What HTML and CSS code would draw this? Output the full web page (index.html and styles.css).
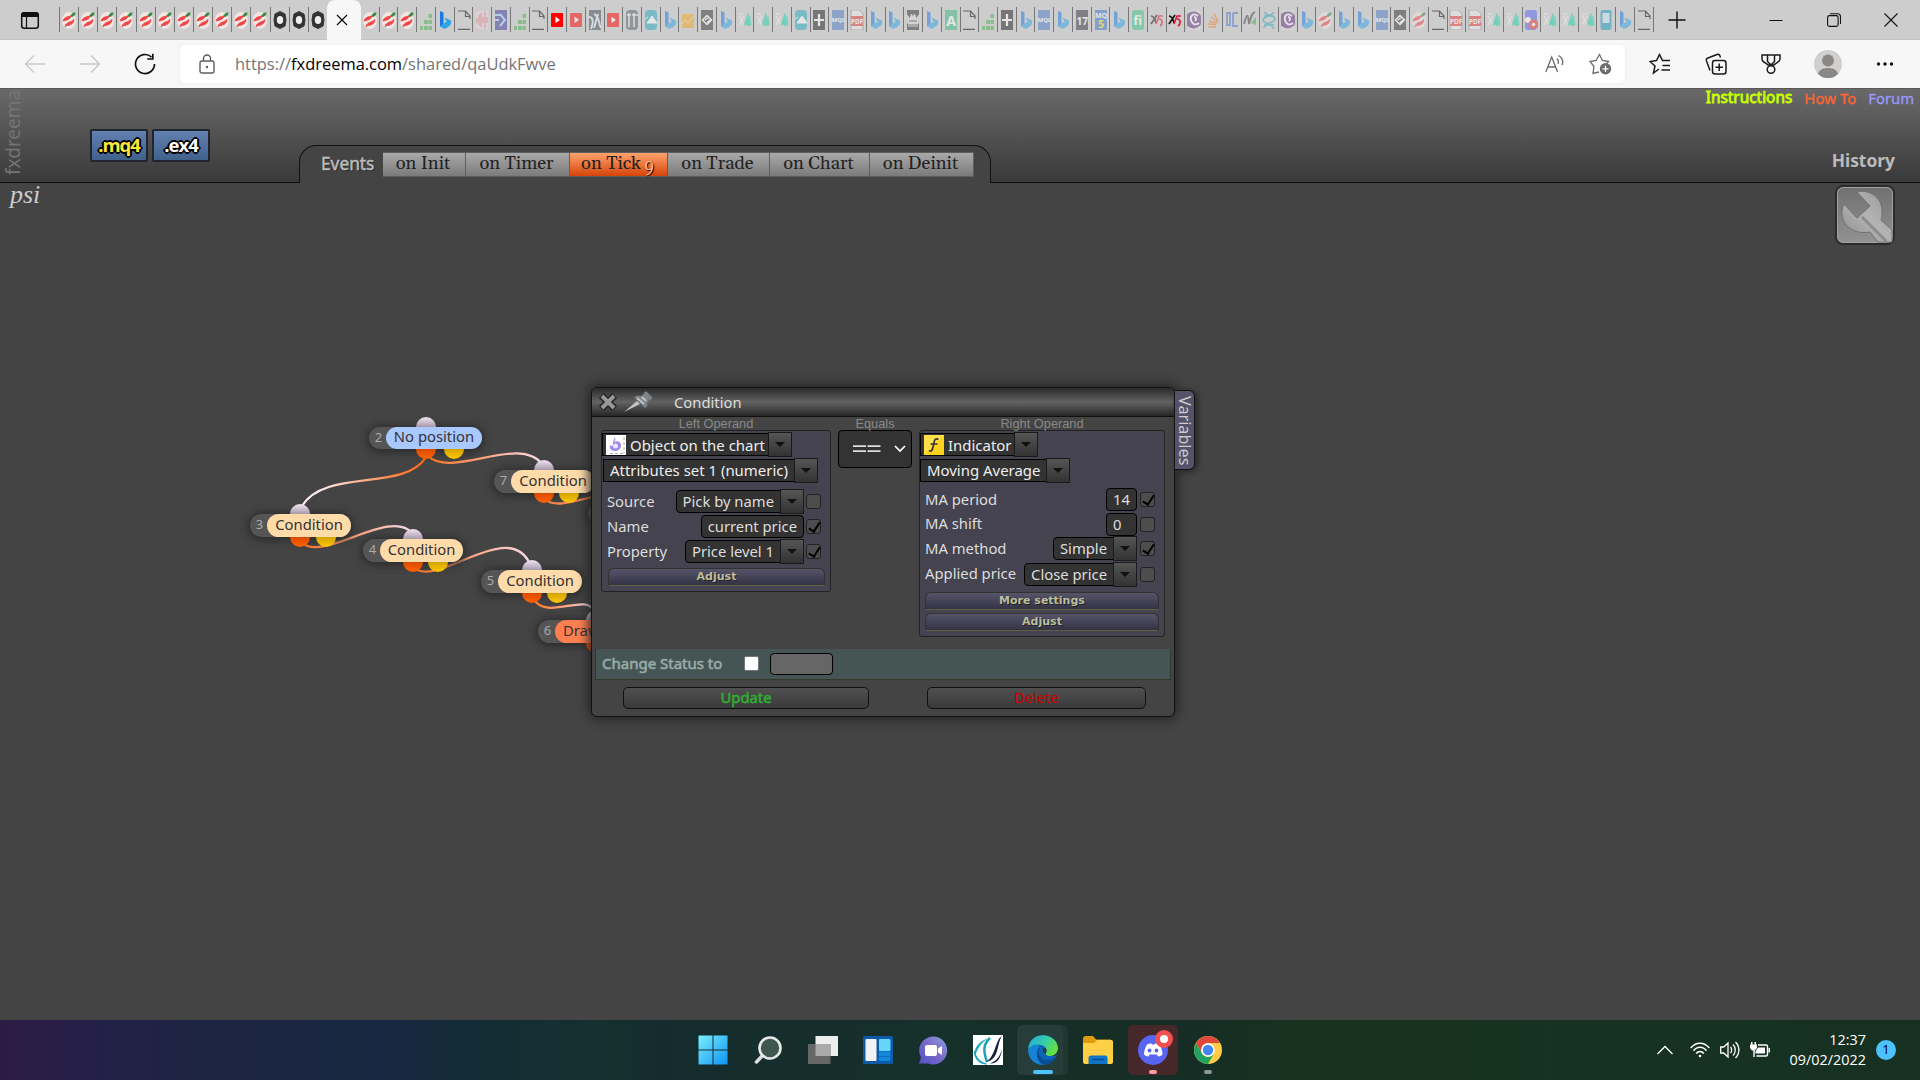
FILE: index.html
```html
<!DOCTYPE html>
<html lang="en">
<head>
	<meta charset="utf-8">
	<title>fxdreema - psi</title>
	<link rel="stylesheet" href="styles.css">
</head>
<body>

	<div class="tabstrip">
		<svg class="tabMenu" width="20" height="20" viewBox="0 0 20 20"><rect x="1.7" y="2.7" width="16.6" height="15.6" rx="2.5" fill="none" stroke="#111" stroke-width="1.5"/><path d="M1.5 7V4.500a2.500 2.500 0 0 1 2.500-2.500h12a2.500 2.500 0 0 1 2.500 2.500V7z" fill="#111"/><path d="M6.500 7v11" stroke="#111" stroke-width="1.200"/></svg>
		<div class="tabs pinned" id="tabsLeft"></div>
		<div class="tab active">
			<svg width="12" height="12" viewBox="0 0 12 12"><path d="M1 1l10 10M11 1L1 11" stroke="#111" stroke-width="1.3"/></svg>
		</div>
		<div class="tabs" id="tabsRight"></div>
		<svg class="newTab" width="18" height="18" viewBox="0 0 18 18"><path d="M9 0.500v17M0.500 9h17" stroke="#111" stroke-width="1.4"/></svg>
		<div class="winButtons">
			<svg width="14" height="14" viewBox="0 0 14 14"><path d="M0.500 7.500h13" stroke="#111"/></svg>
			<svg width="14" height="14" viewBox="0 0 14 14" fill="none" stroke="#111" stroke-width="1.100"><rect x=".6" y="2.600" width="10.500" height="10.800" rx="1.800"/><path d="M3 .7h7.500a3 3 0 0 1 3 3V11"/></svg>
			<svg width="14" height="14" viewBox="0 0 14 14"><path d="M.5 .5l13 13M13.500 .5l-13 13" stroke="#111" stroke-width="1.1"/></svg>
		</div>
	</div>

	<div class="toolbar">
		<div class="navButtons">
			<svg width="22" height="20" viewBox="0 0 22 20" fill="none" stroke="#c9c9c9" stroke-width="1.4"><path d="M21 10H1.500M10 1.500L1.500 10l8.500 8.500"/></svg>
			<svg width="22" height="20" viewBox="0 0 22 20" fill="none" stroke="#c9c9c9" stroke-width="1.4"><path d="M1 10h19.500M12 1.500L20.500 10 12 18.500"/></svg>
			<svg width="22" height="22" viewBox="0 0 22 22" fill="none" stroke="#111" stroke-width="1.7"><path d="M20.500 11A9.500 9.500 0 1 1 17.500 4.100M18.800 .8v5.200h-5.600"/></svg>
		</div>
		<div class="address">
			<svg width="16" height="20" viewBox="0 0 16 20" fill="none" stroke="#5d5d5d" stroke-width="1.400"><rect x="1" y="7" width="14" height="12" rx="2"/><path d="M4.500 7V4.500a3.500 3.500 0 0 1 7 0V7"/><circle cx="8" cy="13" r="1.200" fill="#5d5d5d" stroke="none"/></svg>
			<span class="url">https://<b>fxdreema.com</b>/shared/qaUdkFwve</span>
			<svg class="readAloud" width="20" height="20" viewBox="0 0 20 20" fill="none" stroke="#6b6b6b" stroke-width="1.300"><path d="M.8 18L6.700 3l5.900 15M2.800 13h7.800M12 4.500c1.600 1.700 1.600 3.800 1 5.500M13.500 1.500c4 2.500 5 6 3.500 9.500"/></svg>
			<svg width="23" height="22" viewBox="0 0 23 22" fill="none" stroke="#6b6b6b" stroke-width="1.300"><path d="M10 19l-6 1.500L5 13.500 1 8.500l6-1L10.500 1.500l3 6 6 1-2 2.500"/><circle cx="16.500" cy="15.800" r="5.700" fill="#6b6b6b" stroke="none"/><path d="M16.500 12.700v6.200M13.400 15.800h6.200" stroke="#fff"/></svg>
		</div>
		<div class="toolButtons">
			<svg width="22" height="22" viewBox="0 0 22 22" fill="none" stroke="#1a1a1a" stroke-width="1.500"><path d="M10 16l-5.500 4 1.500-7L1 8.500l6.500-1L10.500 1.500l3 6H21M13.500 12.500H21M12.500 17H21"/></svg>
			<svg width="22" height="22" viewBox="0 0 22 22" fill="none" stroke="#1a1a1a" stroke-width="1.500"><rect x="7.500" y="7.500" width="13.500" height="13.500" rx="2.500"/><path d="M14.200 10.500v7.500M10.500 14.200h7.500M5 17.500L1.500 8c-.5-1.500 0-2.500 1.500-3l9-3.500c1.500-.5 2.500 0 3 1.500l.5 1.500"/></svg>
			<svg width="20" height="22" viewBox="0 0 20 22" fill="none" stroke="#1a1a1a" stroke-width="1.500"><path d="M1 2h18v4c0 3-4 4-6 6H7C5 10 1 9 1 6zM6.500 2v6.500L10 12l3.500-3.500V2"/><circle cx="10" cy="16.500" r="3.800"/></svg>
			<svg width="28" height="28" viewBox="0 0 28 28"><circle cx="14" cy="14" r="14" fill="#d2d0ce"/><circle cx="14" cy="10.500" r="6" fill="#8a8886"/><path d="M4 24c1-8 19-8 20 0a14 14 0 0 1-20 0z" fill="#8a8886"/></svg>
			<svg width="18" height="4" viewBox="0 0 18 4" fill="#111"><circle cx="2.500" cy="2" r="1.700"/><circle cx="9" cy="2" r="1.700"/><circle cx="15.500" cy="2" r="1.700"/></svg>
		</div>
	</div>

	<div class="header">
		<div class="logo">fxdreema</div>
		<div class="export">
			<span class="mq4">.mq4</span>
			<span>.ex4</span>
		</div>
		<div class="events">
			<span class="eventsTitle">Events</span>
			<span class="event init">on Init</span>
			<span class="event timer">on Timer</span>
			<span class="event tick">on Tick <small>9</small></span>
			<span class="event trade">on Trade</span>
			<span class="event chart">on Chart</span>
			<span class="event deinit">on Deinit</span>
		</div>
		<div class="links">
			<div class="topLinks">
				<span class="instructions">Instructions</span>
				<span class="howto">How To</span>
				<span class="forum">Forum</span>
			</div>
			<div class="history">History</div>
		</div>
	</div>

	<div class="canvas">
		<div class="project">psi</div>
		<svg class="tools" width="60" height="60" viewBox="0 0 60 60">
			<defs>
				<linearGradient id="toolBg" x1="0" y1="0" x2="0" y2="1"><stop offset="0" stop-color="#707070"/><stop offset="1" stop-color="#939393"/></linearGradient>
				<linearGradient id="wrench" x1="0" y1="1" x2="1" y2="0"><stop offset="0" stop-color="#8d8d8d"/><stop offset=".5" stop-color="#b3b3b3"/><stop offset="1" stop-color="#999"/></linearGradient>
			</defs>
			<rect x="1" y="1" width="58" height="58" rx="7" fill="url(#toolBg)" stroke="#2b2b2b" stroke-width="2"/>
			<rect x="2.500" y="2.500" width="55" height="55" rx="6" fill="none" stroke="#a2a2a2"/>
			<path d="M22 7c12-3 25 5 25 19 0 4 0 7-1 9l11 10v12H43l-8-10C18 50 7 40 7 28c0-3 .5-6 2-9l13 14 13-12z" fill="url(#wrench)" stroke="#707070"/>
			<path d="M27 32l24 24" stroke="#8b8b8b" stroke-width="3"/>
		</svg>

		<svg class="wires" width="700" height="500" viewBox="0 183 700 500">
			<defs>
				<linearGradient id="w23" gradientUnits="userSpaceOnUse" x1="426" y1="459" x2="302" y2="505"><stop offset="0" stop-color="#ff6a10"/><stop offset=".25" stop-color="#ff8240"/><stop offset=".8" stop-color="#ffe6e2"/><stop offset="1" stop-color="#fff4ff"/></linearGradient>
				<linearGradient id="wire" x1="0" y1="0" x2="1" y2="0"><stop offset="0" stop-color="#ff7420"/><stop offset=".5" stop-color="#ffa580"/><stop offset="1" stop-color="#f4dcec"/></linearGradient>
			</defs>
			<g fill="none" stroke-width="2.300">
				<path d="M426 457C405 492 325 468 302 506" stroke="url(#w23)"/>
				<path d="M428 456C452 479 520 434 542 464" stroke="url(#wire)"/>
				<path d="M301 542C322 564 390 507 412 533" stroke="url(#wire)"/>
				<path d="M413 567C436 590 508 517 530 564" stroke="url(#wire)"/>
				<path d="M533 598C546 622 586 592 594 611" stroke="url(#wire)"/>
				<path d="M545 499C555 509 578 500 600 495" stroke="#ff8a55"/>
			</g>
		</svg>

		<div class="node n2"><i class="in"></i><i class="out"></i><i class="out no"></i><em>2</em><span>No position</span></div>
		<div class="node n3"><i class="in"></i><i class="out"></i><i class="out no"></i><em>3</em><span>Condition</span></div>
		<div class="node n4"><i class="in"></i><i class="out"></i><i class="out no"></i><em>4</em><span>Condition</span></div>
		<div class="node n5"><i class="in"></i><i class="out"></i><i class="out no"></i><em>5</em><span>Condition</span></div>
		<div class="node n6"><i class="in"></i><i class="out"></i><i class="out no"></i><em>6</em><span>Draw</span></div>
		<div class="node n7"><i class="in"></i><i class="out"></i><i class="out no"></i><em>7</em><span>Condition</span></div>
		<div class="node n8"><em>8</em></div>

		<div class="dialog">
			<div class="variables">Variables</div>
			<div class="dialogTitle">
				<svg width="20" height="20" viewBox="0 0 20 20"><path d="M3.500 3.500l13 13M16.500 3.500l-13 13" stroke="#222" stroke-width="7"/><path d="M4 4l12 12M16 4L4 16" stroke="#999" stroke-width="4"/></svg>
				<svg class="pin" width="30" height="22" viewBox="0 0 30 22"><path d="M1 21l13-11 3 3z" fill="#c3c6c8"/><path d="M11 6c3-2 6-1 7-1l3-2c0-2 1-3 3-2l5 5c1 2-1 3-3 3l-2 3c1 2 0 4-2 5z" fill="#7d8386"/><path d="M19 6l4 4M14 7l7 6" stroke="#bcc2c5" stroke-width="2"/></svg>
				<span>Condition</span>
			</div>

			<div class="operands">
				<div class="operand left">
					<h4>Left Operand</h4>
					<div class="panel">
						<div class="combo square first">
							<span><svg width="20" height="20" viewBox="0 0 20 20"><rect width="20" height="20" fill="#fff"/><path d="M4 18.500h14M18 2v16" stroke="#aaa" stroke-dasharray="3 2"/><path d="M9 2c1 2 0 4-1 5 3-2 7 0 7 3 0 4-3 6-6 6-4 0-6-3-5-6 1 2 3 1 3-1 0-3 1-4 2-7z" fill="#a08ae8"/><circle cx="9.500" cy="11" r="2.500" fill="#eee6ff"/></svg>Object on the chart</span><u></u>
						</div>
						<div class="combo square second"><span>Attributes set 1 (numeric)</span><u></u></div>
						<div class="param"><label>Source</label><div class="combo"><span>Pick by name</span><u></u></div><i class="check"></i></div>
						<div class="param"><label>Name</label><div class="field">current price</div><i class="check on"></i></div>
						<div class="param"><label>Property</label><div class="combo"><span>Price level 1</span><u></u></div><i class="check on"></i></div>
						<div class="bar">Adjust</div>
					</div>
				</div>

				<div class="operand middle">
					<h4>Equals</h4>
					<div class="equals">
						<svg width="28" height="8" viewBox="0 0 28 8"><path d="M0 1.200h13M14.500 1.200h13M0 6.200h13M14.500 6.200h13" stroke="#ddd" stroke-width="1.700"/></svg>
						<svg width="12" height="8" viewBox="0 0 12 8"><path d="M1 1l5 5 5-5" stroke="#fff" stroke-width="1.700" fill="none"/></svg>
					</div>
				</div>

				<div class="operand right">
					<h4>Right Operand</h4>
					<div class="panel">
						<div class="combo square first">
							<span><svg width="20" height="20" viewBox="0 0 20 20"><rect width="20" height="20" fill="#ffd21e"/><path d="M0 0h20L0 20z" fill="#ffe04a"/><path d="M14.500 4.500c-3-1.500-4 0-4.500 3L8.500 14c-.5 2-1.500 2.500-3.500 1.500M6.500 9h7" fill="none" stroke="#333" stroke-width="1.700"/></svg>Indicator</span><u></u>
						</div>
						<div class="combo square second"><span>Moving Average</span><u></u></div>
						<div class="param"><label>MA period</label><div class="field num">14</div><i class="check on"></i></div>
						<div class="param short"><label>MA shift</label><div class="field num">0</div><i class="check"></i></div>
						<div class="param"><label>MA method</label><div class="combo"><span>Simple</span><u></u></div><i class="check on"></i></div>
						<div class="param"><label>Applied price</label><div class="combo"><span>Close price</span><u></u></div><i class="check"></i></div>
						<div class="bar">More settings</div>
						<div class="bar">Adjust</div>
					</div>
				</div>
			</div>

			<div class="status">
				<span>Change Status to</span>
				<i></i>
				<div class="statusColor"></div>
			</div>
			<div class="dialogButtons">
				<div class="update">Update</div>
				<div class="delete">Delete</div>
			</div>
		</div>
	</div>

	<div class="taskbar">
		<div class="apps">
			<div class="app"><svg width="30" height="30" viewBox="0 0 30 30"><defs><linearGradient id="win" x1="0" y1="0" x2="1" y2="1"><stop offset="0" stop-color="#7af0ff"/><stop offset="1" stop-color="#0e92f4"/></linearGradient></defs><path d="M.5 .5h14v14H.5zM15.500 .5h14v14h-14zM.5 15.500h14v14H.5zM15.500 15.500h14v14h-14z" fill="url(#win)"/></svg></div>
			<div class="app"><svg width="28" height="28" viewBox="0 0 28 28"><path d="M9.500 18.500L2.500 26" stroke="#ddd" stroke-width="3.500" stroke-linecap="round"/><circle cx="16" cy="12" r="10.500" fill="#40574f" stroke="#e8e8e8" stroke-width="2.600"/></svg></div>
			<div class="app"><svg width="30" height="28" viewBox="0 0 30 28"><rect x="7.500" y="0" width="22.500" height="20" fill="#eee"/><rect x="0" y="8" width="22.500" height="20" fill="#666"/><rect x="7.500" y="8" width="15" height="12" fill="#aaa"/></svg></div>
			<div class="app"><svg width="30" height="28" viewBox="0 0 30 28"><rect width="30" height="28" rx="1.500" fill="#0c5aa8"/><rect x="2.500" y="3" width="11" height="22" rx="1" fill="#f2f2f4"/><rect x="16" y="3" width="11.500" height="12" rx="1" fill="#66d4fb"/><rect x="16" y="15.500" width="11.500" height="4.500" fill="#1487dc"/><rect x="16" y="20.500" width="11.500" height="4.500" rx="1" fill="#1487dc"/></svg></div>
			<div class="app"><svg width="30" height="29" viewBox="0 0 30 29"><defs><linearGradient id="chat" x1="1" y1="0" x2="0" y2="1"><stop offset="0" stop-color="#8ba0e0"/><stop offset=".5" stop-color="#7a68c8"/><stop offset="1" stop-color="#5050c0"/></linearGradient></defs><path d="M15 .5a14 14 0 1 1-5 27H1l2-6A14 14 0 0 1 15 .5z" fill="url(#chat)"/><rect x="7" y="9" width="12" height="11" rx="2" fill="#fff"/><path d="M20 12.500l4-2.500v9l-4-2.500z" fill="#fff"/></svg></div>
			<div class="app"><svg width="30" height="30" viewBox="0 0 30 30"><rect width="30" height="30" fill="#fff"/><path d="M15 3C5 7 0 14 2 22 4 14 8 8 15 3z" fill="#19a5b8"/><path d="M1.500 16c1 6 5 11 12 13-7 0-12-5-12-13z" fill="#19a5b8" stroke="#19a5b8"/><path d="M17 3c-8 7-6 15-3 24" fill="none" stroke="#19a5b8" stroke-width="2.500"/><path d="M29 1c-7 4-6 20-16 26 14-3 10-17 16-26z" fill="#17213f"/><path d="M29 14c-2 8-6 12-12 14.500 7 .5 11-5 12-14.500z" fill="#17213f"/></svg></div>
			<div class="app edge"><svg width="30" height="30" viewBox="0 0 30 30"><defs><linearGradient id="e1" x1="0" y1="0" x2="1" y2=".4"><stop offset="0" stop-color="#25a8e0"/><stop offset=".6" stop-color="#35cda6"/><stop offset="1" stop-color="#62e044"/></linearGradient></defs><circle cx="15" cy="15" r="14.800" fill="#0c63b8"/><path d="M15 13c-1 4 3 8 8 8 3 0 5 0 7-2v-4z" fill="#263d3a"/><path d="M.5 12C2 4 8 .2 15 .2 24 .2 30 7 30 13c0 5-4 8-8 8-3 0-5-1-4-3 2-3 0-7-5-8-5-1-10 0-12.500 5z" fill="url(#e1)"/><path d="M.3 15C3 9 9 9 12 11c-5 3-5 13 4 18.700C6 30.500 0 23 .3 15z" fill="#1584d2"/><path d="M12 13c-4 5 1 13 8 12 4 0 6-2 8.500-4-3 5-8 9-13 8.500C8 27 7 17 12 13z" fill="#0b4c94"/></svg><s></s></div>
			<div class="app"><svg width="30" height="28" viewBox="0 0 30 28"><path d="M0 3c0-2 1-3 2.500-3H10l3 3.500H28V12H0z" fill="#dc9c0c"/><path d="M0 7h11l3-3h14.500c1 0 1.500 1 1.500 2v20c0 1-1 2-2 2H2c-1 0-2-1-2-2z" fill="#ffcf45"/><path d="M5.500 28v-6c0-1.500 1-2.500 2.500-2.500h14c1.500 0 2.500 1 2.500 2.500v6z" fill="#1175c7"/><path d="M9 23.500h12" stroke="#084b91" stroke-width="1.500"/></svg></div>
			<div class="app discord"><svg width="36" height="36" viewBox="0 0 36 36"><circle cx="18" cy="18" r="15" fill="#5865f2"/><path d="M12 12.500c2-1 4-1.200 4.500-1l.5 1h2.500l.5-1c1 0 3 .3 4.500 1 2 3 3 7 3 10-1 1-3 2-4.500 2l-1-2h-7.500l-1 2c-1.500 0-3.500-1-4.500-2 0-3 1-7 3-10z" fill="#fff"/><circle cx="14.500" cy="18.500" r="1.900" fill="#5865f2"/><circle cx="21.500" cy="18.500" r="1.900" fill="#5865f2"/></svg><b></b><s></s></div>
			<div class="app chrome"><svg width="28" height="28" viewBox="0 0 28 28"><circle cx="14" cy="14" r="14" fill="#fc4"/><path d="M1.900 7A14 14 0 0 1 26.100 7H14a7 7 0 0 0-6 10.500z" fill="#e0463c"/><path d="M1.900 7A14 14 0 0 0 14 28l6-10.500A7 7 0 0 1 8 17.500z" fill="#1ea362"/><circle cx="14" cy="14" r="6.800" fill="#fff"/><circle cx="14" cy="14" r="5.200" fill="#4285f4"/></svg><s></s></div>
		</div>
		<div class="tray">
			<svg width="16" height="10" viewBox="0 0 16 10"><path d="M.5 9L8 1.500 15.500 9" fill="none" stroke="#fff" stroke-width="1.300"/></svg>
			<svg width="20" height="16" viewBox="0 0 20 16" fill="none" stroke="#fff" stroke-width="1.500"><path d="M.7 6c5-6.500 13.600-6.500 18.600 0M3.500 8.800c3.500-4.700 9.500-4.700 13 0M6.200 11.500c2-2.800 5.600-2.800 7.600 0"/><circle cx="10" cy="14" r="1.300" fill="#fff" stroke="none"/></svg>
			<svg width="20" height="18" viewBox="0 0 20 18" fill="none" stroke="#fff" stroke-width="1.300"><path d="M.7 6h3L8 2v14l-4.300-4h-3zM10.500 6c1.500 1.500 1.500 4.500 0 6M13 3.500c3 3 3 8 0 11M15.500 1c4.500 4.500 4.500 11.500 0 16"/></svg>
			<svg width="20" height="16" viewBox="0 0 20 16"><path d="M8 3h8c1 0 1.500.5 1.500 1.500v8c0 1-.5 1.500-1.500 1.500H6.500M4 8v7" fill="none" stroke="#fff" stroke-width="1.400"/><path d="M0 2.500h1V0h1.500v2.500H4.500V0H6v2.500h1V6L5 8.500H2L0 6zM8 5.500h7v6H5.500V9.500zM18.500 6h1.500v4.500h-1.500z" fill="#fff"/></svg>
			<div class="clock">12:37<br>09/02/2022</div>
			<div class="badge">1</div>
		</div>
	</div>

	<script>
		// favicons, all on a 20x20 grid where only the middle 14 units are visible
		var icons = {
			mm: '<ellipse cx="10" cy="10.500" rx="7" ry="8.500" fill="#f0e6e4"/><path d="M11 7C12 3.500 14 2 16.500 2.500c0 2.500-1.500 4.500-5.500 4.500z" fill="#3a8a45"/><path d="M4 11c1.500-4.500 5-4 8-5-1 4-5 4-8 5zM6 16.500c1.500-5 6-3.500 9-7-.5 6-5.500 5-9 7z" fill="#f04444" stroke="#f04444"/>',
			ring: '<path d="M5 4l5-2.500L15 4l1 6-1 6-5 2.500L5 16l-1-6z" fill="#333" stroke="#333"/><ellipse cx="10" cy="10" rx="3.200" ry="4" fill="#eee"/>',
			bars: '<path d="M4 16h3v4H4zM8 16h4v4H8zM8 10h4v4H8zM12.500 4H16v4h-3.500zM12.500 10H16v4h-3.500zM12.500 16H16v4h-3.500z" fill="#43b24b"/>',
			bing: '<path d="M5 1l3.500 1.500V14L5 17z" fill="#1a78e8"/><path d="M5 16l3.500-2.500 3-1.700L9.500 7.500l6.500 3c1 4-2 6-3.500 7L9 19z" fill="#2fa5e8"/>',
			doc: '<path d="M4 1h7.500L16 6v3M11.500 1v5.500H16M4 19.300h12" fill="none" stroke="#666" stroke-width="1.200"/>',
			wave: '<path d="M4 1h12v18H4z" fill="#eadada"/><path d="M5 8v5M7 5v10M9 3v14M11 7v6M13 2v16M15 7v6" stroke="#e05a6a"/>',
			fx: '<path d="M4 0h12v20H4z" fill="#3f3a98"/><path d="M4 5h5M4 10h4M9 4l5 6-5 6" fill="none" stroke="#9ad4ff" stroke-width="2"/>',
			yt: '<rect x="4" y="3" width="12" height="14" rx="1" fill="#f00"/><path d="M8.500 6.500v6.500l4.500-3z" fill="#fff"/>',
			jz: '<path d="M4 0h12v20H4z" fill="#454b52"/><path d="M4 7c4 0 5 4 2 12M9 4c6 3 4 9 7 14M13 4L9 18" stroke="#dce8f8" stroke-width="2" fill="none"/>',
			tt: '<rect x="4" y="0" width="12" height="20" rx="4" fill="#56606a"/><path d="M5 5h4M7 3v14M12 3v14M10 5h6" stroke="#eee" stroke-width="1.500"/>',
			tv: '<rect x="4" y="0" width="12" height="20" rx="4" fill="#25a9be"/><path d="M6 13l5-7 5 7zM4 9l3-2" fill="#fff" stroke="#fff"/>',
			yellow: '<path d="M4 4h12v14H4z" fill="#f5a623"/><path d="M4 14l3-4 3 3 6-7" stroke="#f8dca0" fill="none"/>',
			diamond: '<path d="M4 0h12v20H4z" fill="#333"/><path d="M5.500 10L10 5.500l4.500 4.500-4.500 4.500zM8 10l3-2M10 13l3-3" fill="none" stroke="#fff" stroke-width="1.500"/>',
			xa: '<path d="M4 6l5 9M9 6l-5 9M4 4h4" stroke="#eee" stroke-width="1.500"/><path d="M9 15l4-12 1 11zM12 16l3-10 1 9z" fill="#1cd3a8" stroke="#1cd3a8" stroke-width=".6"/>',
			plus: '<path d="M4 0h12v20H4z" fill="#222"/><path d="M10 4v12M5 10h10" stroke="#fff" stroke-width="2.200"/>',
			mql: '<path d="M4 0h12v20H4z" fill="#4f7cc8"/><text x="3.600" y="12" font-size="6" fill="#fff">MQL</text>',
			mql5: '<path d="M4 0h12v20H4z" fill="#3a74c8"/><text x="4" y="8" font-size="7" fill="#fff">MQ</text><text x="7.200" y="18" font-size="10" fill="#ffdf2a">5</text>',
			pdf: '<path d="M4 0h8l4 4v16H4z" fill="#eee" stroke="#777" stroke-width=".8"/><path d="M4 6h12v10H4z" fill="#e83b3b"/><text x="4" y="14" font-size="6.500" fill="#fff">PDF</text>',
			crown: '<path d="M4 0h12v20H4z" fill="#333"/><path d="M4 5l3 4 1.500-5L10 8l1.500-4L13 9l3-4-1 9H5zM5 16h10" fill="#ddd" stroke="#ddd"/><path d="M6 11h8" stroke="#333"/>',
			a: '<path d="M4 0h12v20H4z" fill="#3ab981"/><text x="5.300" y="15.500" font-size="14" fill="#fff">A</text>',
			n17: '<path d="M4 0h12v20H4z" fill="#333844"/><text x="4.500" y="14.500" font-size="10" fill="#fff">17</text>',
			fi: '<rect x="4" y="0" width="12" height="20" rx="3" fill="#3bc582"/><text x="5.300" y="15" font-size="13" fill="#fff">fi</text>',
			xf: '<path d="M4 6c3 0 4 3 5 7M10 5l-6 9" fill="none" stroke="#111" stroke-width="1.600"/><path d="M9 14l3-8h4M12 9c4 0 4 5 1 7" fill="none" stroke="#e2152b" stroke-width="1.600"/>',
			c: '<path d="M4 0h12v20H4z" fill="#ddd"/><circle cx="9.500" cy="10" r="8.500" fill="#65337e"/><path d="M14 6c-5-4-8 0-7 4s4 6 8 3M10 7c2 0 3 2 1 4" fill="none" stroke="#fff" stroke-width="1.800"/>',
			stack: '<path d="M5 17h8M5 14l8 .5M6 11l8 2M8 7l7 5M11 4l4 7" stroke="#f48024" stroke-width="1.400"/>',
			uc: '<path d="M5 3v12h3V3zM11 3h5M11 3v13h5" fill="none" stroke="#4a78c8" stroke-width="1.800"/>',
			n: '<path d="M4 14C7 3 8 3 9 14 12 3 13 3 15 2" fill="none" stroke="#444" stroke-width="2"/><path d="M11 13l5-6v8z" fill="#4aaa50"/>',
			dna: '<path d="M5 2c4 5 11 3 11 7S5 13 5 18M15 2C13 7 4 6 4 10s10 3 11 9M5 6h10M5 15h10" fill="none" stroke="#35a5c0" stroke-width="1.700"/>',
			discord: '<rect x="4" y="0" width="12" height="20" rx="3" fill="#5865f2"/><circle cx="7" cy="10" r="3" fill="#fff"/><circle cx="12.500" cy="14.500" r="5" fill="#e83030"/><circle cx="12.500" cy="14.500" r="1.800" fill="#fff"/>',
			phone: '<rect x="4.500" y="0" width="11" height="20" rx="2" fill="#1899bd"/><path d="M6.500 3h7v10h-7z" fill="#c8e8f2"/>'
		};

		// a star keeps the icon at full strength, the others are sleeping tabs
		var left = 'mm* mm* mm* mm* mm* mm* mm* mm* mm* mm* mm* ring* ring* ring*';
		var right = 'mm* mm* mm* bars bing* doc* wave fx bars doc* yt* yt jz yt tt ' +
			'tv bing yellow diamond bing xa xa xa tv plus mql pdf bing bing crown bing a doc* bars plus bing mql bing n17 mql5 bing fi xf xf* c stack uc n dna ' +
			'c bing mm bing bing mql diamond mm doc* pdf pdf xa xa discord xa xa xa phone bing doc*';

		function showTabs(id, list){
			var html = '';
			list.split(' ').forEach(function(name){
				var awake = name.indexOf('*') > 0;
				html += '<div class="tab' + (awake ? '' : ' asleep') + '"><svg width="14" height="20" viewBox="3 0 14 20">' + icons[name.replace('*', '')] + '</svg></div>';
			});
			document.getElementById(id).innerHTML = html;
		}

		showTabs('tabsLeft', left);
		showTabs('tabsRight', right);
	</script>
</body>
</html>
```

FILE: styles.css
```css
* {
	box-sizing: border-box;
}
body {
	margin: 0;
	width: 1920px;
	height: 1080px;
	overflow: hidden;
	display: flex;
	flex-direction: column;
	background: #444;
	font-family: "Noto Sans", "Open Sans", sans-serif;
	font-size: 14.8px;
	color: #ddd;
}
svg {
	display: block;
	flex: none;
}

/* browser */
.tabstrip {
	height: 40px;
	flex: none;
	display: flex;
	align-items: center;
	background: #cdcdcd;
	border-bottom: 1px solid #c2c2c2;
}
.tabMenu {
	margin-left: 20px;
	margin-right: 19px;
}
.tabs {
	display: flex;
	width: 1293.75px;
}
.tabs.pinned {
	width: 268px;
}
.tabs .tab {
	flex: 1 1 0;
	height: 25px;
	display: flex;
	align-items: center;
	justify-content: center;
	border-left: 1px solid #777;
}
#tabsRight .tab:first-child {
	border-color: transparent;
}
#tabsRight .tab:last-child {
	border-right: 1px solid #777;
}
.asleep svg {
	opacity: .5;
}
.tab text {
	font-family: "Noto Sans", sans-serif;
	font-weight: bold;
}
.tab.active {
	width: 34px;
	height: 40px;
	margin-right: -1px;
	padding-right: 4px;
	background: #f7f7f7;
	border-radius: 8px 8px 0 0;
	display: flex;
	align-items: center;
	justify-content: center;
}
.newTab {
	margin-left: 14px;
}
.winButtons {
	display: flex;
	gap: 43.500px;
	margin-left: auto;
	margin-right: 22px;
}
.toolbar {
	height: 48px;
	flex: none;
	display: flex;
	align-items: center;
	padding-bottom: 1px;
	background: #f7f7f7;
}
.navButtons {
	display: flex;
	align-items: center;
	gap: 33px;
	width: 180px;
	padding-left: 24px;
}
.address {
	width: 1445px;
	height: 38px;
	display: flex;
	align-items: center;
	background: #fff;
	border-radius: 5px;
	padding: 0 13px 0 19px;
	box-shadow: 0 0 2px #e4e4e4;
}
.url {
	margin-left: 20px;
	padding-bottom: 1px;
	font-family: "Open Sans", sans-serif;
	font-size: 16.450px;
	color: #757575;
}
.url b {
	font-weight: normal;
	color: #000;
}
.readAloud {
	margin-left: auto;
	margin-right: 24px;
}
.toolButtons {
	display: flex;
	align-items: center;
	flex: 1;
	justify-content: space-between;
	padding: 0 26px 0 24px;
}

/* page header */
.header {
	height: 95px;
	flex: none;
	display: flex;
	position: relative;
	background: linear-gradient(#696969, #3a3a3a);
	border-top: 1px solid #5c5657;
	border-bottom: 1px solid #111;
}
.logo {
	writing-mode: vertical-rl;
	transform: rotate(180deg);
	width: 26px;
	height: 86px;
	font-size: 19px;
	line-height: 26px;
	color: #747474;
}
.export {
	display: flex;
	gap: 4px;
	margin: 40px 0 0 64px;
	width: 209px;
}
.export span {
	width: 58px;
	height: 33px;
	border: 2px solid #20242c;
	border-radius: 2px;
	background: linear-gradient(#6380b0, #3f618c);
	font-family: "Open Sans", sans-serif;
	font-weight: bold;
	font-size: 18.500px;
	letter-spacing: -1px;
	line-height: 27px;
	text-align: center;
	color: #fff;
	text-shadow: 1px 1px #000, -1px 1px #000, 1px -1px #000, -1px -1px #000, 2px 0 #000, -2px 0 #000, 0 2px #000, 0 -2px #000;
}
.export .mq4 {
	color: #fbe73a;
}
.events {
	width: 692px;
	height: 38px;
	margin-top: 56px;
	margin-bottom: -1px;
	padding: 6px 0 0 21px;
	display: flex;
	background: #444;
	border: 1px solid #111;
	border-bottom: 0;
	border-radius: 17px 17px 0 0;
}
.eventsTitle {
	width: 62px;
	font-size: 17.300px;
	line-height: 23px;
	color: #bbb;
	-webkit-text-stroke: .5px #bbb;
	text-shadow: 1px 1px 1px #222;
}
.event {
	height: 25px;
	padding-right: 2px;
	border: 1px solid #5e5e5e;
	border-left-width: 0;
	background: linear-gradient(#a9a9a9, #7b7b7b);
	color: #222;
	font-family: Gelasio, Georgia, "Liberation Serif", serif;
	font-size: 18.300px;
	line-height: 21px;
	text-align: center;
	white-space: nowrap;
}
.init { width: 83px; }
.timer { width: 104px; }
.tick {
	width: 98px;
	background: linear-gradient(#ffa36c, #d5440a);
}
.trade { width: 102px; }
.chart { width: 100px; }
.deinit { width: 104px; }
.tick small {
	display: inline-block;
	margin-left: -1px;
	font-size: 17px;
	line-height: 17px;
	color: #ffb387;
	text-shadow: 1px 1px 1px #000;
	transform: translateY(3px);
}
.links {
	margin-left: auto;
	text-align: right;
}
.topLinks {
	display: flex;
	gap: 12px;
	margin-right: 6px;
	line-height: 18px;
	-webkit-text-stroke: .3px currentColor;
}
.instructions {
	font-size: 15.400px;
	color: #c8ff00;
	-webkit-text-stroke: .8px #c8ff00;
}
.howto {
	font-size: 15px;
	color: #ff6633;
}
.forum { color: #9999ff; }
.history {
	margin: 41px 25px 0 0;
	font-size: 17.400px;
	font-weight: bold;
	line-height: 24px;
	color: #bbb;
}

/* canvas */
.canvas {
	flex: 1;
	position: relative;
	background: #444;
}
.project {
	margin: -5px 0 0 10px;
	font: italic 26px/34px "Liberation Serif", serif;
	color: #ccc;
}
.tools {
	position: absolute;
	left: 1835px;
	top: 2px;
}
.wires {
	position: absolute;
	left: 0;
	top: 0;
}
.node {
	position: absolute;
	width: 101px;
	height: 23px;
	display: flex;
	border-radius: 12px;
	background: #555;
	box-shadow: 0 1px 8px 2px #2a2a2a;
}
.node em {
	width: 17px;
	padding-left: 2px;
	text-align: center;
	font-style: normal;
	font-size: 13px;
	line-height: 21px;
	color: #aaa;
}
.node span {
	position: relative;
	flex: 1;
	border-radius: 12px;
	background: #ffdbaa;
	color: #333;
	line-height: 21px;
	text-align: center;
}
.node i {
	position: absolute;
	left: 40px;
	width: 20px;
	height: 10px;
}
.node .in {
	top: -10px;
	border-radius: 10px 10px 0 0;
	background: linear-gradient(#f2e4f4, #a699a9);
}
.node .out {
	bottom: -10px;
	border-radius: 0 0 10px 10px;
	background: linear-gradient(#d94a00, #ff6200);
}
.node .no {
	left: 66px;
	background: linear-gradient(#d2a400, #ffc800);
}
.n2 { left: 369px; top: 244px; width: 113px; height: 22px; }
.n3 { left: 250px; top: 331px; }
.n4 { left: 363px; top: 356px; width: 100px; }
.n5 { left: 481px; top: 387px; }
.n6 { left: 538px; top: 437px; }
.n7 { left: 494px; top: 287px; }
.n8 { left: 588px; top: 319px; }
.n2 i { left: 47px; }
.n2 .no { left: 75px; }
.n2 span {
	background: #a9c8ff;
	line-height: 19px;
}
.n4 .no,
.n7 .no { left: 65px; }
.n5 i { left: 41px; }
.n6 i { left: 48px; }
.n6 span {
	background: #ff7f50;
	text-align: left;
	padding-left: 8px;
}

/* condition dialog */
.dialog {
	position: absolute;
	left: 591px;
	top: 204px;
	width: 584px;
	height: 330px;
	border: 1px solid #111;
	border-radius: 6px;
	background: #444;
	box-shadow: 0 0 12px 2px #222;
}
.variables {
	position: absolute;
	left: 583px;
	top: 2px;
	width: 20px;
	height: 80px;
	padding-top: 2px;
	writing-mode: vertical-rl;
	text-align: center;
	line-height: 18px;
	font-size: 16.200px;
	color: #ccc;
	background: #55536a;
	border: 1px solid #111;
	border-left: 0;
	border-radius: 0 6px 6px 0;
	box-shadow: 2px 1px 7px #222;
}
.dialogTitle {
	height: 29px;
	display: flex;
	align-items: center;
	padding-left: 6px;
	border-bottom: 1px solid #111;
	border-radius: 5px 5px 0 0;
	background: linear-gradient(#2a2a2a, #636363 50%, #262626);
}
.dialogTitle span {
	margin-left: 21px;
}
.pin {
	margin-left: 5px;
}
.operands {
	display: flex;
	gap: 7px;
	align-items: flex-start;
	height: 232px;
	padding-left: 9px;
}
.operand h4 {
	margin: 0;
	height: 13px;
	font: 12.800px/14px "Liberation Sans", sans-serif;
	text-align: center;
	color: #888;
}
.left { width: 230px; }
.middle { width: 74px; }
.right { width: 246px; }
.panel {
	height: 162px;
	padding: 1px 6px 0;
	background: #44434f;
	border: 1px solid #222;
	border-radius: 3px;
}
.right .panel {
	height: 207px;
	padding: 1px 5px 0;
}
.combo {
	display: flex;
	align-items: center;
	width: fit-content;
	height: 25px;
}
.combo span,
.field {
	display: flex;
	align-items: center;
	height: 23px;
	padding: 0 6px 1px 7px;
	background: #333;
	border: 1px solid #000;
	border-radius: 4px 0 0 4px;
	line-height: 20px;
	white-space: nowrap;
}
.combo u {
	width: 24px;
	height: 25px;
	margin-left: -1px;
	background: linear-gradient(#555, #333);
	border: 1px solid #1a1a1a;
}
.combo u:before {
	content: "";
	display: block;
	margin: 9px auto 0;
	width: 0;
	border: 5px solid transparent;
	border-top-color: #111;
	border-bottom: 0;
}
.square span {
	border-radius: 0;
	font-size: 14.950px;
	color: #eee;
}
.square.first span {
	padding: 0 3px;
}
.square.first svg {
	margin-right: 4px;
}
.first {
	margin-left: -6px;
}
.second {
	margin-top: 1px;
	margin-left: -5px;
	margin-bottom: 6px;
}
.second span {
	padding-left: 6px;
	padding-right: 6px;
}
.right .first {
	margin-left: -5px;
}
.right .second {
	margin-bottom: 4px;
}
.param {
	display: flex;
	align-items: center;
	height: 25px;
	padding-right: 3px;
}
.param label {
	margin-right: auto;
	padding-bottom: 2px;
}
.left .param label {
	margin-left: -1px;
}
.param .combo span {
	padding-left: 6px;
}
.right .param {
	height: 25.500px;
	padding-right: 4px;
}
.right .short {
	height: 23.500px;
}
.field {
	padding: 0 6px 1px;
	border-radius: 4px;
}
.field.num {
	width: 31px;
	justify-content: flex-start;
}
.check {
	position: relative;
	width: 15px;
	height: 15px;
	margin-left: 2px;
	border: 1px solid #222;
	border-radius: 3px;
	background: #4d4d4d;
}
.right .check {
	margin-left: 3px;
}
.check.on:after {
	content: "";
	position: absolute;
	left: 4px;
	top: 0;
	width: 5px;
	height: 10px;
	border: solid #000;
	border-width: 0 2px 2px 0;
	transform: rotate(33deg);
}
.bar {
	height: 18px;
	margin-top: 3px;
	background: linear-gradient(#56546a, #343344);
	border: 1px solid #33322e;
	border-bottom: 1px dotted #6a6648;
	border-radius: 6px 6px 0 0;
	font: bold 11px/16px "DejaVu Sans", sans-serif;
	text-align: center;
	color: #bdbd9b;
	text-shadow: 1px 1px #222;
}
.param + .bar {
	margin-top: 5px;
}
.left .bar {
	width: 217px;
	margin-top: 4px;
}
.equals {
	height: 38px;
	display: flex;
	align-items: center;
	justify-content: space-between;
	padding: 0 5px 0 14px;
	background: #333;
	border: 1px solid #000;
	border-radius: 4px;
}
.status {
	height: 31px;
	margin: 0 3px;
	display: flex;
	align-items: center;
	padding-left: 6px;
	background: #445554;
	border: 1px solid #33382c;
	border-top: 0;
}
.status span {
	width: 142px;
	padding-bottom: 2px;
	font-size: 15px;
	color: #99aaa8;
	-webkit-text-stroke: .6px #99aaa8;
}
.status i {
	width: 15px;
	height: 15px;
	margin-top: -1px;
	background: #fff;
	border: 1px solid #777;
	border-radius: 2px;
}
.statusColor {
	width: 63px;
	height: 22px;
	margin-left: 11px;
	background: #666;
	border: 1px solid #000;
	border-radius: 4px;
}
.dialogButtons {
	display: flex;
	gap: 58px;
	padding: 7px 0 0 31px;
}
.dialogButtons div {
	width: 246px;
	height: 22px;
	background: linear-gradient(#505050, #3a3a3a);
	border: 1px solid #111;
	border-radius: 5px;
	line-height: 19px;
	text-align: center;
}
.dialogButtons .update {
	color: #33aa33;
	-webkit-text-stroke: .6px #3a3;
}
.dialogButtons .delete {
	width: 219px;
	color: #cc0000;
}

/* taskbar */
.taskbar {
	height: 60px;
	flex: none;
	display: flex;
	align-items: center;
	background: linear-gradient(90deg, #2c1c44 0, #2a1d46 40px, #232047 100px, #1c2542 230px, #182841 400px, #142c37 460px, #15302f 600px, #152c2e 660px, #16302a 950px, #152d24 1200px, #17331f 1300px, #163122 1920px);
}
.apps {
	display: flex;
	gap: 5px;
	margin-left: 687.500px;
}
.app {
	position: relative;
	width: 50px;
	height: 50px;
	display: flex;
	align-items: center;
	justify-content: center;
	border-radius: 5px;
}
/* second card behind, two windows are open */
.edge {
	width: 45px;
	margin-right: 5px;
	padding-left: 5px;
	background: #263d3a;
	box-shadow: 5px 0 #20362f, -1px 0 #263d3a;
}
.discord {
	background: #46282b;
}
.app s {
	position: absolute;
	left: 21px;
	bottom: 1px;
	width: 8px;
	height: 4px;
	border-radius: 2px;
	background: #8f9994;
}
.edge s {
	left: 15px;
	width: 20px;
	background: #4cc2ff;
}
.discord s {
	background: #ff99a4;
}
.discord b {
	position: absolute;
	left: 27px;
	top: 5px;
	width: 18px;
	height: 18px;
	border: 5.500px solid #f05050;
	border-radius: 50%;
	background: #fff;
}
.tray {
	display: flex;
	align-items: center;
	gap: 10px;
	margin-left: auto;
	padding-right: 24px;
}
.tray svg:first-child {
	margin-right: 7px;
}
.clock {
	width: 86px;
	font-family: "Open Sans", sans-serif;
	font-size: 14.400px;
	line-height: 20px;
	text-align: right;
	color: #fff;
}
.badge {
	width: 20px;
	height: 20px;
	border-radius: 50%;
	background: #4cc2ff;
	color: #000;
	font-size: 12px;
	line-height: 20px;
	text-align: center;
}
```
